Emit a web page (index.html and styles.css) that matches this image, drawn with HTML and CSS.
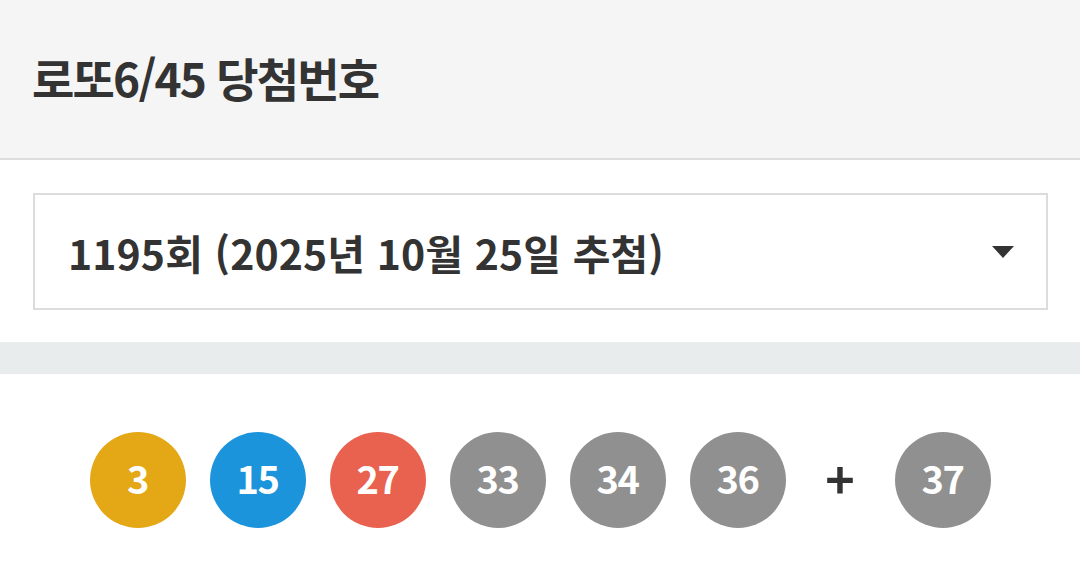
FILE: index.html
```html
<!DOCTYPE html>
<html lang="ko">
<head>
    <meta charset="UTF-8">
    <meta name="viewport" content="width=device-width, initial-scale=1.0">
    <link rel="stylesheet" href="styles.css">
</head>
<body>

<!-- Page title -->
<header class="page-head">
    <h1 class="page-title">로또6/45 당첨번호</h1>
</header>

<!-- Draw selector -->
<div class="draw-select-wrap">
    <div class="draw-select">
        <span class="draw-select-text">1195회 (2025년 10월 25일 추첨)</span>
        <span class="draw-select-arrow"></span>
    </div>
</div>

<div class="divider-band"></div>

<!-- Winning numbers -->
<div class="balls">
    <span class="ball ball-yellow">3</span>
    <span class="ball ball-blue">15</span>
    <span class="ball ball-red">27</span>
    <span class="ball ball-gray">33</span>
    <span class="ball ball-gray">34</span>
    <span class="ball ball-gray">36</span>
    <span class="ball-plus">+</span>
    <span class="ball ball-gray">37</span>
</div>

</body>
</html>
```

FILE: styles.css
```css
body {
    margin: 0;
    padding: 0;
    background-color: white;
    color: #333;
    font-family: "Noto Sans CJK KR", "Noto Sans", sans-serif;
}

/* Page title */
.page-head {
    background-color: #f5f5f5;
    border-bottom: 2px solid #dedede;
    height: 158px;
    display: flex;
    align-items: center;
    padding: 0 32px;
}
.page-title {
    margin: 0;
    margin-top: -4px;
    font-size: 46px;
    font-weight: 700;
    letter-spacing: -1.8px;
    color: #333;
}

/* Draw selector */
.draw-select-wrap {
    padding: 33px 32px 32px 33px;
}
.draw-select {
    height: 113px;
    border: 2px solid #dcdcdc;
    display: flex;
    align-items: center;
    justify-content: space-between;
    padding: 0 32px 0 33px;
}
.draw-select-text {
    font-size: 41px;
    font-weight: 700;
    letter-spacing: 0.1px;
    color: #333;
}
.draw-select-arrow {
    width: 0;
    height: 0;
    border-left: 11px solid transparent;
    border-right: 11px solid transparent;
    border-top: 12px solid #333;
}

.divider-band {
    height: 32px;
    background-color: #e8ecec;
}

/* Balls */
.balls {
    display: flex;
    justify-content: center;
    align-items: center;
    gap: 24px;
    padding: 58px 0;
}
.ball {
    width: 96px;
    height: 96px;
    box-sizing: border-box;
    padding-bottom: 5px;
    border-radius: 50%;
    display: flex;
    align-items: center;
    justify-content: center;
    color: white;
    font-size: 38px;
    font-weight: 700;
    letter-spacing: -1.5px;
}
.ball-yellow { background-color: #e4a817; }
.ball-blue { background-color: #1c94db; }
.ball-red { background-color: #e8624f; }
.ball-gray { background-color: #909090; }
.ball-plus {
    width: 61px;
    margin-top: -6px;
    text-align: center;
    font-size: 50px;
    font-weight: 700;
    color: #333;
}
```
